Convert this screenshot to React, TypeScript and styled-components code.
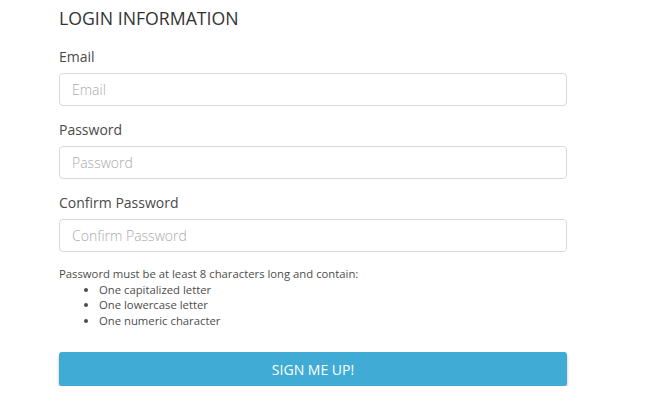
import React from "react";
import styled, { createGlobalStyle } from "styled-components";

const GlobalStyle = createGlobalStyle`
  body {
    margin: 0;
    background: #fff;
    font-family: "Open Sans", "Liberation Sans", sans-serif;
  }
`;

const Wrapper = styled.div`
  width: 508px;
  padding: 6px 0 0 59px;
`;

const Title = styled.h2`
  margin: 0 0 17px;
  font-size: 17.7px;
  line-height: 24px;
  font-weight: 400;
  color: #333;
`;

const Field = styled.div`
  display: flex;
  flex-direction: column;
  margin-bottom: 14px;
`;

const Label = styled.label`
  font-size: 14px;
  line-height: 20px;
  color: #4a4a4a;
  margin-bottom: 6px;
`;

const Input = styled.input`
  box-sizing: border-box;
  height: 33px;
  width: 100%;
  padding: 0 12px;
  border: 1px solid #d9d9d9;
  border-radius: 4px;
  font-family: inherit;
  font-size: 14px;
  color: #333;
  outline: none;

  &::placeholder {
    color: #aaa;
    font-weight: 300;
  }
`;

const Note = styled.div`
  margin-top: 1px;
  font-size: 11.3px;
  line-height: 15.5px;
  color: #4d4d4d;
`;

const Rules = styled.ul`
  margin: 0;
  padding-left: 40px;
`;

const Button = styled.button`
  display: block;
  width: 100%;
  height: 34px;
  margin-top: 24px;
  border: none;
  border-radius: 3px;
  background: #40acd6;
  color: #fff;
  font-family: inherit;
  font-size: 14px;
  text-transform: uppercase;
  box-shadow: 0 3px 3px rgba(0, 0, 0, 0.28);
  cursor: pointer;
`;

const fields = [
  { id: "email", label: "Email", type: "email" },
  { id: "password", label: "Password", type: "password" },
  { id: "confirm", label: "Confirm Password", type: "password" },
];

export default function App() {
  return (
    <Wrapper>
      <GlobalStyle />
      <Title>LOGIN INFORMATION</Title>
      {fields.map((f) => (
        <Field key={f.id}>
          <Label htmlFor={f.id}>{f.label}</Label>
          <Input id={f.id} type={f.type} placeholder={f.label} />
        </Field>
      ))}
      <Note>
        Password must be at least 8 characters long and contain:
        <Rules>
          <li>One capitalized letter</li>
          <li>One lowercase letter</li>
          <li>One numeric character</li>
        </Rules>
      </Note>
      <Button>Sign me up!</Button>
    </Wrapper>
  );
}
